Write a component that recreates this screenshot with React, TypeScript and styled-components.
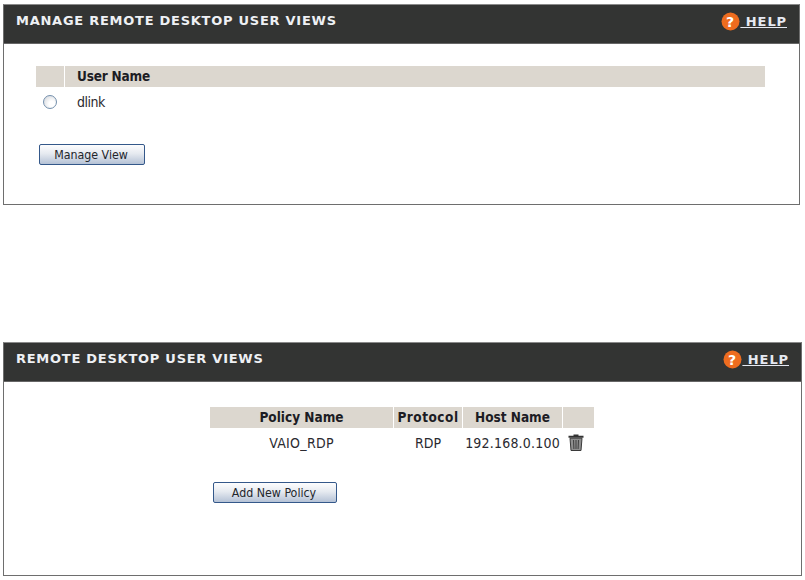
import styled, { createGlobalStyle } from "styled-components";

const GlobalStyle = createGlobalStyle`
  html, body {
    margin: 0;
    padding: 0;
    background: #fff;
  }
  body {
    font-family: "DejaVu Sans Condensed", "DejaVu Sans", Verdana, sans-serif;
    color: #222;
  }
`;

const Page = styled.div`
  width: 805px;
  height: 580px;
  padding-top: 4px;
  padding-left: 3px;
  box-sizing: border-box;
  overflow: hidden;
`;

const Panel = styled.section<{ $width: number; $height: number; $gap?: number }>`
  box-sizing: border-box;
  width: ${(p) => p.$width}px;
  height: ${(p) => p.$height}px;
  margin-bottom: ${(p) => p.$gap ?? 0}px;
  border: 1px solid #6e6e6e;
  border-top-color: #8a8a8a;
  display: flex;
  flex-direction: column;
`;

const Header = styled.header`
  height: 39px;
  flex: none;
  background: #333433;
  border-bottom: 1px solid #666;
  display: flex;
  align-items: flex-start;
  justify-content: space-between;
  padding: 8px 12px 0 12px;
  box-sizing: border-box;
`;

const Title = styled.h2`
  margin: 0;
  font-family: "DejaVu Sans", Verdana, sans-serif;
  font-size: 13px;
  line-height: 15px;
  font-weight: 700;
  letter-spacing: 0.74px;
  color: #eef0f4;
`;

const HelpLink = styled.a`
  display: flex;
  align-items: center;
  font-family: "DejaVu Sans", Verdana, sans-serif;
  font-size: 13px;
  line-height: 16px;
  font-weight: 700;
  letter-spacing: 0.9px;
  color: #e6e9f2;
  text-decoration: underline;
  white-space: pre;
  margin-top: -1px;
`;

const Body = styled.div<{ $pad: string }>`
  padding: ${(p) => p.$pad};
  flex: 1;
`;

const Table = styled.div<{ $columns: string; $width: number }>`
  display: grid;
  grid-template-columns: ${(p) => p.$columns};
  column-gap: 1px;
  width: ${(p) => p.$width}px;
  font-size: 13.5px;
`;

const HeadCell = styled.div<{ $align?: string; $indent?: number; $spacing?: number }>`
  background: #dcd7cf;
  height: 21px;
  line-height: 21px;
  font-weight: 700;
  letter-spacing: ${(p) => p.$spacing ?? 0}px;
  color: #1c1c24;
  text-align: ${(p) => p.$align ?? "center"};
  padding-left: ${(p) => p.$indent ?? 0}px;
  white-space: nowrap;
`;

const Cell = styled.div<{ $align?: string; $indent?: number; $height: number; $spacing?: number }>`
  height: ${(p) => p.$height}px;
  display: flex;
  align-items: center;
  justify-content: ${(p) => p.$align ?? "center"};
  padding-left: ${(p) => p.$indent ?? 0}px;
  font-size: 14px;
  letter-spacing: ${(p) => p.$spacing ?? 0}px;
  color: #2a2a30;
  white-space: nowrap;
`;

const Radio = styled.span`
  display: block;
  box-sizing: border-box;
  width: 14px;
  height: 14px;
  border-radius: 50%;
  border: 1.5px solid #7590ad;
  background: radial-gradient(circle at 65% 65%, #fff 25%, #cdd1d7 100%);
`;

const Button = styled.button<{ $width: number; $top: number; $left: number }>`
  display: block;
  box-sizing: border-box;
  width: ${(p) => p.$width}px;
  height: 21px;
  margin: ${(p) => p.$top}px 0 0 ${(p) => p.$left}px;
  padding: 0 2px 0 0;
  border: 1px solid #34588a;
  border-radius: 2px;
  background: linear-gradient(#fdfdfe 0%, #e6eaf0 45%, #b5c2d6 100%);
  font-family: "DejaVu Sans Condensed", "DejaVu Sans", sans-serif;
  font-size: 12.3px;
  color: #23262c;
`;

function HelpIcon() {
  return (
    <svg width="19" height="19" viewBox="0 0 19 19">
      <circle cx="9.5" cy="9.5" r="9" fill="#ee6c1f" />
      <text
        x="9.5"
        y="14.5"
        textAnchor="middle"
        fontFamily="DejaVu Sans"
        fontWeight="700"
        fontSize="14"
        fill="#fff"
      >
        ?
      </text>
    </svg>
  );
}

function TrashIcon() {
  return (
    <svg width="16" height="17" viewBox="0 0 16 17">
      <path d="M5.500 0.500h5v1.200h5v2H0.500v-2h5z" fill="#333" />
      <path d="M2 4.200h12l-1 12.300H3z" fill="#8f8f8f" stroke="#3a3a3a" />
      <path d="M5.500 6l.4 9M8 6v9M10.500 6l-.4 9" stroke="#444" strokeWidth="1.100" />
    </svg>
  );
}

function PanelHeader({ title }: { title: string }) {
  return (
    <Header>
      <Title>{title}</Title>
      <HelpLink>
        <HelpIcon />
        {" HELP"}
      </HelpLink>
    </Header>
  );
}

export default function App() {
  return (
    <>
      <GlobalStyle />
      <Page>
        <Panel $width={797} $height={201} $gap={137}>
          <PanelHeader title="MANAGE REMOTE DESKTOP USER VIEWS" />
          <Body $pad="22px 0 0 32px">
            <Table $columns="28px 700px" $width={729}>
              <HeadCell />
              <HeadCell $align="left" $indent={12} $spacing={-0.2}>
                User Name
              </HeadCell>
              <Cell $height={30}>
                <Radio />
              </Cell>
              <Cell $height={30} $align="flex-start" $indent={12} $spacing={-0.5}>
                dlink
              </Cell>
            </Table>
            <Button $width={106} $left={3} $top={27}>
              Manage View
            </Button>
          </Body>
        </Panel>
        <Panel $width={799} $height={234}>
          <PanelHeader title="REMOTE DESKTOP USER VIEWS" />
          <Body $pad="25px 0 0 206px">
            <Table $columns="183px 68px 99px 31px" $width={384}>
              <HeadCell>Policy Name</HeadCell>
              <HeadCell $spacing={0.5}>Protocol</HeadCell>
              <HeadCell>Host Name</HeadCell>
              <HeadCell />
              <Cell $height={29} $spacing={0.3}>VAIO_RDP</Cell>
              <Cell $height={29}>RDP</Cell>
              <Cell $height={29} $spacing={0.2}>192.168.0.100</Cell>
              <Cell $height={29} $align="flex-start" $indent={5}>
                <TrashIcon />
              </Cell>
            </Table>
            <Button $width={124} $left={3} $top={25}>
              Add New Policy
            </Button>
          </Body>
        </Panel>
      </Page>
    </>
  );
}
